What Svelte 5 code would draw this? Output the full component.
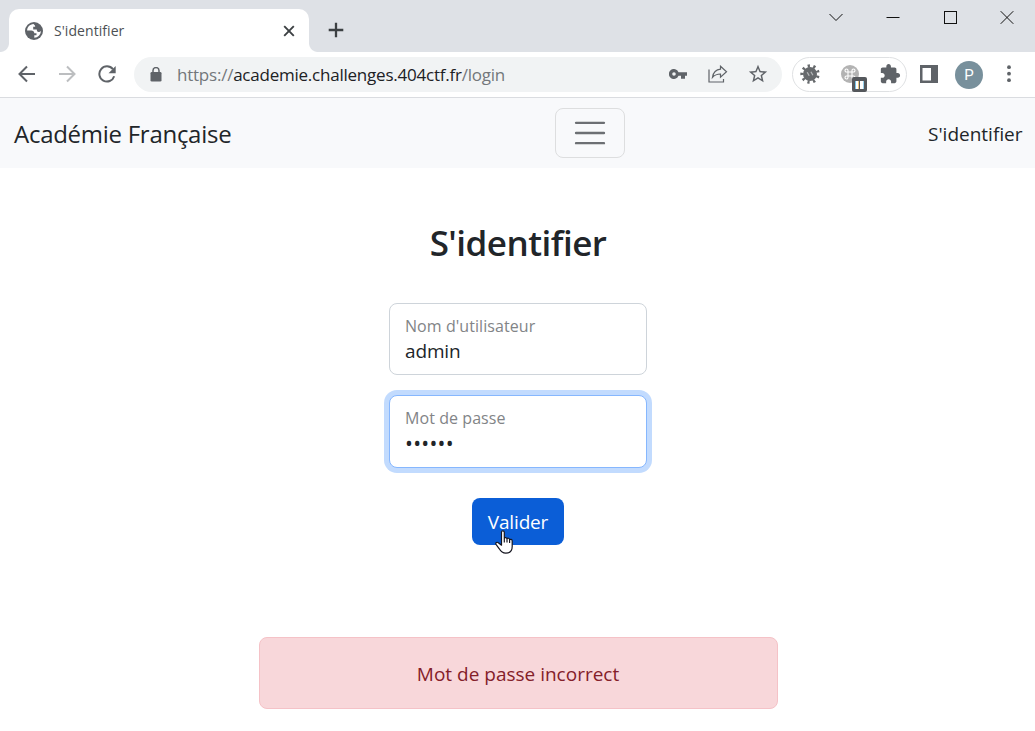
<script>
  let username = $state('admin');
  let password = $state('secret');
</script>

<div class="window">
  <header class="tabstrip">
    <div class="tab">
      <svg class="globe" width="18" height="18" viewBox="0 0 18 18">
        <circle cx="9" cy="9" r="9" fill="#5f6368" />
        <path d="M8.500 2.100C4.800 2.300 2.200 5.300 2.100 8.500H6.300C8 8.500 9.300 9.500 9.300 11.200H11.500V13.200H9.300V15.700C12.900 15.600 15.800 12.700 15.800 9.200 15.200 8.900 14.900 9.900 13.600 9.900 12 9.900 11.800 8.400 11.800 7.500H8.200V4.800H10.200C10.200 3.500 9.600 3.200 8.500 2.100Z" fill="#fff" />
      </svg>
      <span class="tab-title">S'identifier</span>
      <svg class="close" width="12" height="12" viewBox="0 0 12 12"><path d="M1.200 1.200l9.600 9.600M10.800 1.200l-9.600 9.600" stroke="#3c4043" stroke-width="1.900" /></svg>
    </div>
    <svg class="plus" width="16" height="16" viewBox="0 0 16 16"><path d="M8 .7v14.600M.7 8h14.600" stroke="#3c4043" stroke-width="2.300" /></svg>
    <div class="controls">
      <svg width="14" height="14" viewBox="0 0 14 14"><path d="M.5 4l6.500 6.500L13.500 4" /></svg>
      <svg width="14" height="14" viewBox="0 0 14 14"><path d="M.5 7.500h13" /></svg>
      <svg width="14" height="14" viewBox="0 0 14 14"><path d="M1 1.500h12v12H1z" shape-rendering="crispEdges" /></svg>
      <svg width="14" height="14" viewBox="0 0 14 14"><path d="M.7 1.200l12.600 12.600M13.300 1.200L.7 13.800" /></svg>
    </div>
  </header>

  <div class="toolbar">
    <svg class="nav" width="18" height="18" viewBox="0 0 18 18"><path d="M17 9H2M9 1.500L1.500 9 9 16.500" fill="none" stroke="#5f6368" stroke-width="2" /></svg>
    <svg class="nav" width="18" height="18" viewBox="0 0 18 18"><path d="M1 9h15M9 1.500L16.500 9 9 16.500" fill="none" stroke="#bcbec0" stroke-width="2" /></svg>
    <svg class="nav" width="18" height="18" viewBox="0 0 18 18"><path d="M14.900 4.200A7.600 7.600 0 1 0 16.200 11.300" fill="none" stroke="#5f6368" stroke-width="2" /><path d="M17.700 1v7.200h-7.200z" fill="#5f6368" /></svg>

    <div class="omnibox">
      <svg class="lock" width="12" height="15" viewBox="0 0 12 15"><rect x=".5" y="5" width="11" height="9.500" rx="1.300" fill="#5f6368" /><path d="M3 6V3.600a3 3 0 0 1 6 0V6" fill="none" stroke="#5f6368" stroke-width="1.500" /></svg>
      <span class="url"><i>https://</i>academie.challenges.404ctf.fr<i>/login</i></span>
      <svg class="key" width="18" height="10" viewBox="0 0 18 10"><path fill="#5f6368" fill-rule="evenodd" d="M9.500 3.200A5 5 0 1 0 9.500 6.800H12V9.700H16V6.800H18V3.200ZM5 3.200A1.800 1.800 0 1 1 5 6.800 1.800 1.800 0 0 1 5 3.200Z" /></svg>
      <svg class="share" width="20" height="18" viewBox="0 0 20 18" fill="none" stroke="#5f6368" stroke-width="1.200"><path d="M1 4.500V17h14.500v-3" /><path d="M12.500 1.200l6 5.500-6 5.500V9C8.500 9 6.500 10 4.500 12.300 5.200 8 8 4.600 12.500 4.200Z" /></svg>
      <svg class="star" width="22" height="22" viewBox="0 0 24 24"><path fill="#5f6368" d="M22 9.240l-7.190-.62L12 2 9.190 8.630 2 9.240l5.460 4.730L5.820 21 12 17.270 18.180 21l-1.630-7.030L22 9.240zM12 15.400l-3.760 2.270 1-4.280-3.320-2.880 4.380-.38L12 6.100l1.710 4.040 4.380.38-3.320 2.880 1 4.280L12 15.400z" /></svg>
    </div>

    <div class="extensions">
      <svg width="20" height="20" viewBox="0 0 20 20">
        <circle cx="10" cy="10" r="7" fill="#66696c" />
        <circle cx="10" cy="10" r="8.100" fill="none" stroke="#66696c" stroke-width="3.200" stroke-dasharray="2.200 3.454" transform="rotate(12 10 10)" />
        <path d="M7.200 8.300l2 3.500M10.900 7.800l2 3.500" stroke="#b4b6b8" stroke-width="1.300" />
      </svg>
      <div class="command">
        <svg width="18" height="18" viewBox="0 0 18 18"><circle cx="9" cy="9" r="9" fill="#b3b3b3" /><path d="M7 7h4v4H7zM7 7H5.500A1.500 1.500 0 1 1 7 5.500ZM11 7V5.500A1.500 1.500 0 1 1 12.500 7ZM11 11h1.500A1.500 1.500 0 1 1 11 12.500ZM7 11v1.500A1.500 1.500 0 1 1 5.500 11Z" fill="none" stroke="#fff" stroke-width="1.100" /></svg>
        <svg class="badge" width="15" height="15" viewBox="0 0 15 15"><rect width="15" height="15" rx="2" fill="#55585c" /><path d="M3 4h4v8H3zM8 4h4v8H8z" fill="#fff" /><path d="M3.500 4v8" stroke="#77c5e8" /><path d="M6.500 4v8" stroke="#e8c77c" /><path d="M11.500 4v8" stroke="#9bd3ed" /></svg>
      </div>
      <svg width="22" height="22" viewBox="0 0 24 24"><path fill="#5f6368" d="M20.500 11H19V7c0-1.100-.9-2-2-2h-4V3.500C13 2.120 11.880 1 10.500 1S8 2.120 8 3.500V5H4c-1.100 0-1.990.9-1.990 2v3.800H3.500c1.490 0 2.700 1.210 2.700 2.700s-1.210 2.700-2.700 2.700H2V20c0 1.100.9 2 2 2h3.800v-1.500c0-1.490 1.210-2.700 2.700-2.700 1.490 0 2.700 1.210 2.700 2.700V22H17c1.100 0 2-.9 2-2v-4h1.500c1.380 0 2.500-1.120 2.500-2.500S21.880 11 20.500 11z" /></svg>
    </div>

    <svg class="panel" width="18" height="18" viewBox="0 0 18 18"><path fill="#5f6368" fill-rule="evenodd" d="M0 0h18v18H0zM2.500 3v12.500H11V3z" /></svg>
    <div class="avatar">P</div>
    <svg class="dots" width="4" height="18" viewBox="0 0 4 18" fill="#5f6368"><circle cx="2" cy="2.200" r="1.900" /><circle cx="2" cy="8.700" r="1.900" /><circle cx="2" cy="15.200" r="1.900" /></svg>
  </div>

  <nav class="navbar">
    <div class="brand"><span>Académie Française</span></div>
    <button class="toggler" aria-label="Menu">
      <svg width="38" height="38" viewBox="0 0 30 30"><path d="M4 7h22M4 15h22M4 23h22" stroke="rgba(33,37,41,.65)" stroke-width="1.900" stroke-linecap="round" /></svg>
    </button>
    <div class="signin"><span>S'identifier</span></div>
  </nav>

  <main>
    <h1><span>S'identifier</span></h1>
    <form>
      <label class="field">
        <span class="caption user">Nom d'utilisateur</span>
        <input type="text" bind:value={username} />
      </label>
      <label class="field focused">
        <span class="caption pass">Mot de passe</span>
        <input class="secret" type="password" bind:value={password} />
      </label>
      <button type="button" class="submit">
        <span>Valider</span>
        <svg class="pointer" width="18" height="24" viewBox="0 0 18 24"><path d="M6.500 14V2.300C6.500.3 9.300.3 9.300 2.300V8.500C9.500 7 12 7.300 12 9 12.300 7.700 14.600 8 14.600 9.900 15.200 8.900 17.200 9.200 17.200 11V16.500C17.200 20.800 14.500 23.200 10.800 23.200 7.300 23.200 5.600 21.200 4.300 18.800L1 14.300C.2 12.600 2 11.700 3.300 12.700L6.500 15.200ZM9.300 8v4.500M12 9v3.500M14.600 10v3" fill="#fff" stroke="#15151f" stroke-width="1.200" stroke-linejoin="round" /></svg>
      </button>
    </form>
    <div class="alert"><span>Mot de passe incorrect</span></div>
  </main>
</div>

<style>
  :global(body) { margin: 0; background: #fff; }
  * { box-sizing: border-box; }
  .window { width: 1035px; height: 731px; overflow: hidden; background: #fff; color: #212529; font-family: "Open Sans", "Noto Sans", sans-serif; font-weight: 400; }
  svg { display: block; flex: none; }
  span { white-space: nowrap; }

  .tabstrip { height: 52px; display: flex; background: #dee1e6; padding-left: 9px; }
  .tab { position: relative; width: 300px; height: 43px; margin-top: 9px; padding: 0 14px 0 16px; display: flex; align-items: center; background: #fff; border-radius: 10px 10px 0 0; }
  .tab::before, .tab::after { content: ""; position: absolute; bottom: 0; width: 9px; height: 9px; }
  .tab::before { left: -9px; background: radial-gradient(circle at 0 0, transparent 8.500px, #fff 9.500px); }
  .tab::after { right: -9px; background: radial-gradient(circle at 9px 0, transparent 8.500px, #fff 9.500px); }
  .tab-title { margin-left: 11px; flex: 1; font-size: 14px; letter-spacing: .06px; color: #4c5054; }
  .plus { margin: 22px 0 0 19px; }
  .controls { display: flex; gap: 43px; margin: 10px 21px 0 auto; fill: none; stroke: #111; stroke-width: 1; }

  .toolbar { height: 46px; display: flex; align-items: center; padding: 0 0 1px 17.500px; border-bottom: 1px solid #dadce0; }
  .nav { margin-right: 22px; }
  .omnibox { width: 648px; height: 35px; margin: 1px 0 0 -3.500px; padding: 0 13px 1px 16px; display: flex; align-items: center; background: #f1f3f4; border-radius: 18px; }
  .url { width: 329px; margin: 0 164px 0 15px; font-size: 17px; letter-spacing: -.23px; color: #202124; }
  .url i { font-style: normal; color: #73777b; }
  .share { margin-left: 21px; }
  .star { margin-left: 19px; }
  .extensions { width: 115px; height: 35px; margin: 1px 0 0 10px; padding: 0 5px 1px 7px; display: flex; align-items: center; justify-content: space-between; border: 1px solid #dfe1e3; border-radius: 18px; }
  .command { position: relative; margin-left: 1px; }
  .badge { position: absolute; left: 11px; top: 12px; }
  .panel { margin-left: 13px; }
  .avatar { width: 28px; height: 28px; margin: 1px 0 0 17px; border-radius: 50%; background: #78909c; color: #fff; font: 15px/28px Roboto, sans-serif; text-align: center; }
  .dots { margin-left: 24px; }

  .navbar { height: 70px; padding: 0 13px 0 14px; display: flex; align-items: center; justify-content: space-between; background: #f8f9fb; }
  .brand { width: 237px; padding-top: 2px; font-size: 24px; line-height: 34px; letter-spacing: -.27px; }
  .signin { width: 94px; padding-top: 1px; font-size: 19px; line-height: 28px; }
  .toggler { width: 70px; height: 50px; padding: 0; display: flex; align-items: center; justify-content: center; background: none; border: 1px solid #dddedf; border-radius: 8px; }

  main { display: flex; flex-direction: column; align-items: center; padding-left: 1px; }
  h1 { margin: 51px 0 37px; font-size: 35px; line-height: 47px; font-weight: 600; letter-spacing: -.52px; }
  form { display: flex; flex-direction: column; align-items: center; }
  .field { width: 258px; height: 72px; padding: 11px 15px; display: flex; flex-direction: column; background: #fff; border: 1px solid #ced4da; border-radius: 8px; }
  .focused { height: 73px; margin-top: 20px; border-color: #86b7fe; box-shadow: 0 0 0 5px #c2dbfe; }
  .caption { font-size: 16px; line-height: 23px; letter-spacing: .07px; color: #828487; }
  input { width: 100%; height: 26px; padding: 0; border: 0; outline: 0; background: none; color: #212529; font: 400 19px/26px "Open Sans", sans-serif; letter-spacing: -.15px; }
  .secret { font-size: 21px; letter-spacing: .25px; }
  .submit { position: relative; width: 92px; height: 47px; margin-top: 30px; padding: 0; border: 0; border-radius: 8px; background: #0b5ed7; color: #fff; font: 400 19px/28px "Open Sans", sans-serif; letter-spacing: -.15px; }
  .pointer { position: absolute; left: 23px; top: 32px; }
  .alert { width: 519px; height: 72px; margin-top: 92px; display: flex; align-items: center; justify-content: center; background: #f8d7da; border: 1px solid #f5c2c7; border-radius: 8px; color: #842029; font-size: 19px; padding-top: 2px; }
</style>
